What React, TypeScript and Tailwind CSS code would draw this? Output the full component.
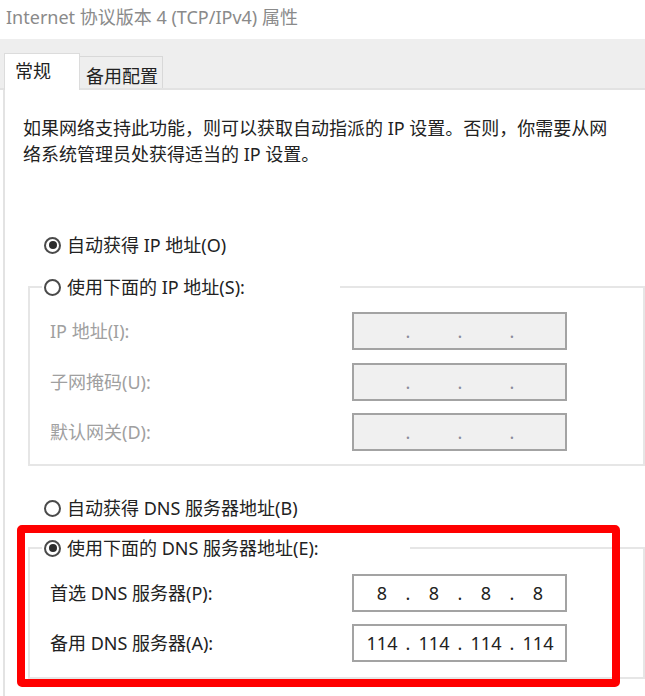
const Radio = ({ checked }: { checked?: boolean }) => (
  <span className="w-[17px] h-[17px] rounded-full border-2 border-[#4a4a4a] bg-white flex items-center justify-center shrink-0">
    {checked && <span className="w-[8px] h-[8px] rounded-full bg-[#2b2b2b]" />}
  </span>
);

const IpBox = ({ parts, disabled }: { parts: string[]; disabled?: boolean }) => (
  <div
    className={`w-[215px] h-[38px] border-2 border-[#a3a3a3] flex items-center pl-[8px] text-[18px] ${
      disabled ? "bg-[#f0f0f0] text-[#8a8a9a]" : "bg-white text-[#222]"
    }`}
  >
    {parts.map((p, i) => (
      <div key={i} className="flex">
        {i > 0 && <span className="w-[12px] text-center">.</span>}
        <span className="w-[40px] text-center">{p}</span>
      </div>
    ))}
  </div>
);

const Row = ({ label, parts, disabled }: { label: string; parts: string[]; disabled?: boolean }) => (
  <div className="flex items-center pl-[20px]">
    <span className={`w-[302px] ${disabled ? "text-[#a0a0a0]" : "text-[#222]"}`}>{label}</span>
    <IpBox parts={parts} disabled={disabled} />
  </div>
);

export default function App() {
  const empty = ["", "", "", ""];
  return (
    <div className="relative w-[645px] h-[696px] overflow-hidden bg-white text-[18px] leading-[26px] font-['Noto_Sans','Noto_Sans_CJK_SC',sans-serif]">
      {/* title */}
      <div className="h-[39px] flex items-center pl-[6px] pb-[5px] text-[#8a8a8a]">
        Internet 协议版本 4 (TCP/IPv4) 属性
      </div>

      {/* tabs */}
      <div className="h-[51px] bg-[#eeeeee] border-b-2 border-[#e2e2e2] flex items-end pl-[4px]">
        <div className="w-[76px] h-[37px] -mb-[2px] bg-white border-l border-t border-r border-[#dcdcdc] flex items-center pl-[10px] pb-[3px] text-[#222]">
          常规
        </div>
        <div className="w-[83px] h-[32px] border-t border-r border-[#d8d8d8] flex items-center pl-[6px] pt-[6px] text-[#222]">
          备用配置
        </div>
      </div>

      {/* panel */}
      <div className="ml-[3px] border-l-2 border-[#e3e3e3] h-[606px]">
        <p className="pt-[25px] pl-[18px] text-[#222]">
          如果网络支持此功能，则可以获取自动指派的 IP 设置。否则，你需要从网
          <br />
          络系统管理员处获得适当的 IP 设置。
        </p>

        <div className="mt-[65px] h-[26px] flex items-center gap-[6px] pl-[39px] text-[#222]">
          <Radio checked />
          <span>自动获得 IP 地址(O)</span>
        </div>

        <fieldset className="mt-[16px] ml-[23px] border-2 border-[#e6e6e6] pb-[13px]">
          <legend className="ml-[12px] w-[298px] pl-[2px] h-[26px] flex items-center gap-[6px] text-[#222]">
            <Radio />
            <span>使用下面的 IP 地址(S):</span>
          </legend>
          <div className="mt-[12px] flex flex-col gap-[12.5px]">
            <Row label="IP 地址(I):" parts={empty} disabled />
            <Row label="子网掩码(U):" parts={empty} disabled />
            <Row label="默认网关(D):" parts={empty} disabled />
          </div>
        </fieldset>

        <div className="mt-[29px] h-[26px] flex items-center gap-[6px] pl-[39px] text-[#222]">
          <Radio />
          <span>自动获得 DNS 服务器地址(B)</span>
        </div>

        <fieldset className="mt-[14px] ml-[23px] border-2 border-[#e6e6e6] pb-[15px]">
          <legend className="ml-[12px] w-[368px] pl-[2px] h-[26px] flex items-center gap-[6px] text-[#222]">
            <Radio checked />
            <span>使用下面的 DNS 服务器地址(E):</span>
          </legend>
          <div className="mt-[13px] flex flex-col gap-[12px]">
            <Row label="首选 DNS 服务器(P):" parts={["8", "8", "8", "8"]} />
            <Row label="备用 DNS 服务器(A):" parts={["114", "114", "114", "114"]} />
          </div>
        </fieldset>
      </div>

      {/* red highlight annotation */}
      <div className="absolute left-[17px] top-[525px] w-[603px] h-[162px] border-[8px] border-[#ff0000] rounded-[5px]" />
    </div>
  );
}
